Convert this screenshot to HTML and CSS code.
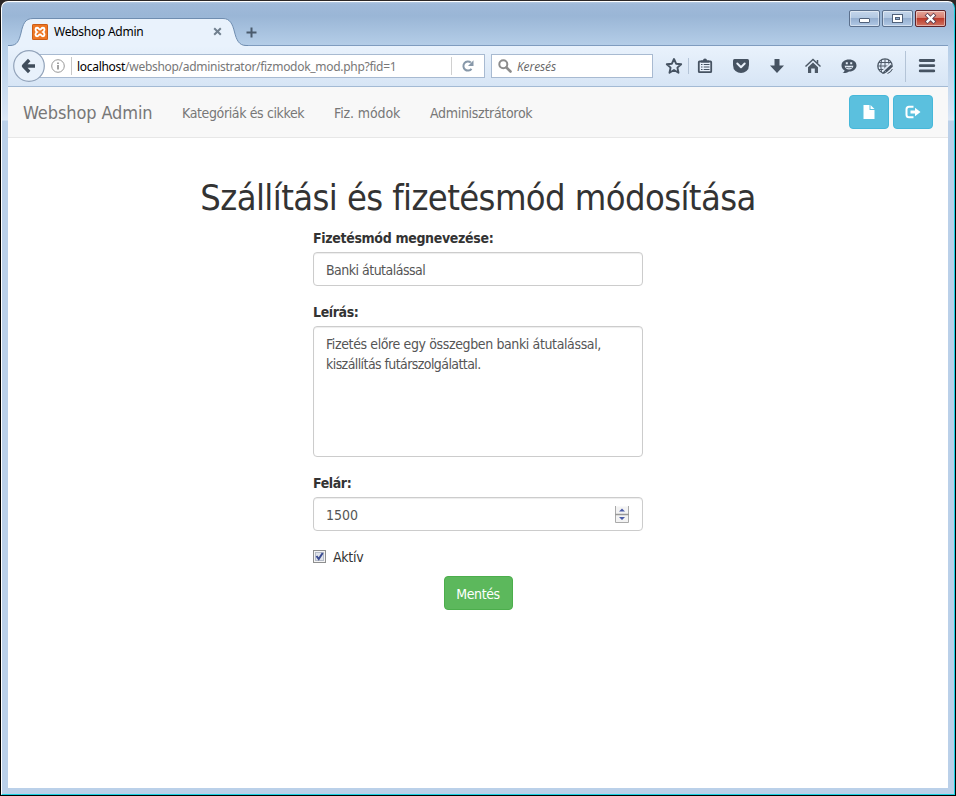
FILE: index.html
```html
<!DOCTYPE html>
<html lang="hu">
<head>
<meta charset="utf-8">
<title>Webshop Admin</title>
<link rel="stylesheet" href="styles.css">
</head>
<body>
<div class="window">
  <div class="titlebar">
    <div class="tab">
      <svg class="tab-shape" width="240" height="29" viewBox="0 0 240 29">
        <path d="M0 27.5H2C9 27.5 11 23 13 15C15 6 17 .5 25 .5H215C222 .5 224.500 6 226.500 14C228.500 22 231 27.500 238 27.500H240V29H0Z" fill="#e9f2fc"/>
        <path d="M0 27.500H2C9 27.500 11 23 13 15C15 6 17 .5 25 .5H215C222 .5 224.500 6 226.500 14C228.500 22 231 27.500 238 27.500H240" fill="none" stroke="#6f8db0"/>
      </svg>
      <svg class="favicon" width="16" height="16" viewBox="0 0 16 16">
        <rect width="16" height="16" rx="1.500" fill="#ee7623"/><rect x=".5" y=".5" width="15" height="15" rx="1" fill="none" stroke="#c95d18"/>
        <path d="M5 3.800C3.300 3.800 2.800 6.600 5 8C2.800 9.400 3.300 12.200 5 12.200C7 12.200 6.500 10.400 8 10.400S9 12.200 11 12.200C12.700 12.200 13.200 9.400 11 8C13.200 6.600 12.700 3.800 11 3.800C9 3.800 9.500 5.600 8 5.600S7 3.800 5 3.800Z" fill="none" stroke="#fff" stroke-width="1.900"/>
      </svg>
      <span class="tab-title">Webshop Admin</span>
      <svg class="tab-close" width="9" height="9" viewBox="0 0 9 9"><path d="M1.200 1.200L7.800 7.800M7.800 1.200L1.200 7.800" stroke="#71808f" stroke-width="2"/></svg>
    </div>
    <svg class="new-tab" width="11" height="11" viewBox="0 0 11 11"><path d="M5.500 .5V10.500M.5 5.500H10.500" stroke="#4a5b6d" stroke-width="2"/></svg>
    <div class="controls">
      <div class="control"><svg width="29" height="15" viewBox="0 0 29 15"><rect x="9.500" y="7.500" width="10" height="4" rx=".5" fill="#fff" stroke="#50617a"/></svg></div>
      <div class="control"><svg width="29" height="15" viewBox="0 0 29 15"><rect x="9.500" y="3.500" width="10" height="8" fill="#fff" stroke="#50617a"/><rect x="12.500" y="6.500" width="4" height="2" fill="#8fabcf" stroke="#50617a"/></svg></div>
      <div class="control control-close"><svg width="29" height="15" viewBox="0 0 29 15"><path d="M11.500 4.500L17.500 10.500M17.500 4.500L11.500 10.500" stroke="#604050" stroke-width="4" stroke-linecap="square"/><path d="M11.500 4.500L17.500 10.500M17.500 4.500L11.500 10.500" stroke="#fff" stroke-width="2.300" stroke-linecap="square"/></svg></div>
    </div>
  </div>

  <div class="toolbar">
    <svg class="back" width="32" height="32" viewBox="0 0 32 32"><circle cx="16" cy="16" r="15.300" fill="#e8f1fb" stroke="#92a3ba" stroke-width="1.200"/><path d="M16.200 10L10.500 16L16.200 22M11 16H22" fill="none" stroke="#3f4c5b" stroke-width="3.400" stroke-linejoin="round"/></svg>
    <div class="urlbar">
      <svg class="info" width="14" height="14" viewBox="0 0 14 14"><circle cx="7" cy="7" r="6.300" fill="none" stroke="#989898"/><path d="M7 6V10.500M7 3.500V5" stroke="#8a8a8a" stroke-width="1.600"/></svg>
      <span class="url"><span class="host">localhost</span><span class="path">/webshop/administrator/fizmodok_mod.php?fid=1</span></span>
      <span class="reload"><svg width="12" height="12" viewBox="0 0 12 12"><path d="M9.500 8.800A4.500 4.500 0 1 1 8.800 2.600" fill="none" stroke="#8798a9" stroke-width="2"/><path d="M11.500 .3V6H6Z" fill="#8798a9"/></svg></span>
    </div>
    <div class="search">
      <svg width="14" height="14" viewBox="0 0 14 14"><circle cx="5.300" cy="5.300" r="4" fill="none" stroke="#8c8c8c" stroke-width="2"/><path d="M8.500 8.500L12.500 12.500" stroke="#8c8c8c" stroke-width="2.600" stroke-linecap="round"/></svg>
      <span>Keresés</span>
    </div>
    <div class="tools">
      <svg width="18" height="18" viewBox="0 0 18 18"><path d="M9 2L11.100 6.700L16.200 7.200L12.400 10.600L13.500 15.700L9 13L4.500 15.700L5.600 10.600L1.800 7.200L6.900 6.700Z" fill="none" stroke="#465362" stroke-width="1.900" stroke-linejoin="round"/></svg>
      <i class="rule rule-short"></i>
      <svg width="18" height="18" viewBox="0 0 18 18"><path d="M3.500 4.500H14.500Q15.200 4.500 15.200 5.200V14.500Q15.200 15.200 14.500 15.200H3.500Q2.800 15.200 2.800 14.500V5.200Q2.800 4.500 3.500 4.500Z" fill="#e9f1fb" stroke="#465362" stroke-width="1.800"/><path d="M5 5.500V3.500H7Q7 1.500 9 1.500T11 3.500H13V5.500Z" fill="#465362"/><path d="M5 7.500H6.500M7.700 7.500H13.500M5 10H6.500M7.700 10H13.500M5 12.500H6.500M7.700 12.500H13.500" stroke="#465362" stroke-width="1.200"/></svg>
      <svg width="18" height="18" viewBox="0 0 18 18"><path d="M2.500 2H15.500Q17 2 17 3.500V8Q17 12 14.500 14T9 16Q6 16 3.500 14T1 8V3.500Q1 2 2.500 2Z" fill="#465362"/><path d="M5.300 6.500L9 10.200L12.700 6.500" fill="none" stroke="#e9f1fb" stroke-width="2" stroke-linecap="round" stroke-linejoin="round"/></svg>
      <svg width="18" height="18" viewBox="0 0 18 18"><path d="M6.500 2H11.500V8.500H16L9 16L2 8.500H6.500Z" fill="#465362"/></svg>
      <svg width="18" height="18" viewBox="0 0 18 18"><path d="M1.500 9.500L9 2.500L16.500 9.500M13.500 3V6" fill="none" stroke="#4d5966" stroke-width="1.500"/><path d="M4 10.300L9 5.600L14 10.300V16H10.800V11.500H7.200V16H4Z" fill="#4d5966"/></svg>
      <svg width="18" height="18" viewBox="0 0 18 18"><path d="M9 2.500C13.500 2.500 16.500 5 16.500 8.500S13 14.800 9 14.500C7 16 4.500 16.300 2.500 16C4 15.300 4.500 14.500 4.500 13.300C2.500 12.300 1.500 10.500 1.500 8.500C1.500 5 4.500 2.500 9 2.500Z" fill="#465362"/><path d="M4.500 8.800H13.500Q12.500 12.500 9 12.500T4.500 8.800Z" fill="#e4edf8"/><path d="M6 10.300Q9 11.500 12 10.300" fill="none" stroke="#465362" stroke-width=".8"/><path d="M5.800 6.300H7.800M10.200 6.300H12.200" stroke="#e4edf8" stroke-width="2"/></svg>
      <svg width="18" height="18" viewBox="0 0 18 18"><g fill="none" stroke="#4f5b69"><circle cx="9" cy="9" r="7.200" stroke-width="1.300"/><path d="M9 2V16M2 9H16M3 5.500H15M3 12.500H15M5.500 3Q4 9 5.500 15M12.500 3Q14 9 12.500 15"/></g><path d="M8 16L16 8.500" stroke="#e3edf8" stroke-width="6"/><path d="M9.500 14.500L16 8.500" stroke="#465362" stroke-width="2.800"/><path d="M6 17L10.300 15.700L8.300 13.500Z" fill="#465362"/><path d="M11.500 16.500Q15 15.500 16.400 12" fill="none" stroke="#4f5b69"/></svg>
      <i class="rule"></i>
      <svg width="18" height="18" viewBox="0 0 18 18"><path d="M2.200 3.500H15.800M2.200 8.700H15.800M2.200 13.900H15.800" stroke="#465362" stroke-width="2.800" stroke-linecap="round"/></svg>
    </div>
  </div>

  <div class="page">
    <nav class="navbar">
      <a class="brand">Webshop Admin</a>
      <a class="link link-categories">Kategóriák és cikkek</a>
      <a class="link link-payments">Fiz. módok</a>
      <a class="link link-admins">Adminisztrátorok</a>
      <div class="actions">
        <a class="action"><svg width="14" height="14" viewBox="0 0 14 14"><path d="M1.500 0H7.500V5H12.500V14H1.500Z" fill="#fff"/><path d="M8.500 0L12.500 4H8.500Z" fill="#fff"/></svg></a>
        <a class="action"><svg width="16" height="14" viewBox="0 0 16 14"><path d="M8.500 1.800H4Q1.500 1.800 1.500 4.300V9.700Q1.500 12.200 4 12.200H8.500" fill="none" stroke="#fff" stroke-width="2"/><path d="M5.500 5.500H10V2.700L15.500 7L10 11.300V8.500H5.500Z" fill="#fff"/></svg></a>
      </div>
    </nav>
    <main>
      <h1>Szállítási és fizetésmód módosítása</h1>
      <form class="form">
        <label class="label">Fizetésmód megnevezése:</label>
        <div class="field name">Banki átutalással</div>
        <label class="label tight">Leírás:</label>
        <div class="field area"><div class="line1">Fizetés előre egy összegben banki átutalással,</div><div class="line2">kiszállítás futárszolgálattal.</div></div>
        <label class="label tight">Felár:</label>
        <div class="field number"><span>1500</span>
          <svg class="spinner" width="14" height="17" viewBox="0 0 14 17"><rect x=".5" y=".5" width="13" height="16" fill="#f3f3f3"/><path d="M.5 0V16.500H13.500V0" fill="none" stroke="#aaa"/><path d="M0 8.500H14" stroke="#999" stroke-width="1.500"/><path d="M4 5.500H10L7 2.500ZM4 11H10L7 14Z" fill="#4a5ba8"/></svg>
        </div>
        <label class="check">
          <svg width="13" height="13" viewBox="0 0 13 13"><rect x=".5" y=".5" width="12" height="12" fill="#f4f4f4" stroke="#8e8f8f"/><rect x="2.500" y="2.500" width="8" height="8" fill="#dfe3ea" stroke="#b5bbc7"/><path d="M3.500 6L5.700 9L9.700 3" fill="none" stroke="#3b4c92" stroke-width="2"/></svg>
          <span>Aktív</span>
        </label>
        <button type="button" class="save">Mentés</button>
      </form>
    </main>
  </div>
</div>
</body>
</html>
```
FILE: styles.css
```css
* { box-sizing: border-box; }
body { margin: 0; background: linear-gradient(#2b2626 0, #2b2626 3px, #000 30px); }
svg { display: block; flex: none; }

.window {
  width: 954px; height: 794px;
  margin: 1px 0 1px 1px;
  padding: 0 6px 6px;
  display: flex; flex-direction: column;
  border: 1px solid #19cfe0;
  border-left-color: #fff; border-top-color: #fff;
  border-radius: 7px 7px 0 0;
  background: linear-gradient(#b4c9e2 0, #9fb9d9 2px, #9ab6d6 14px, #b5cee8 44px, #d5e3f4 110px, #dce8f6 118px, #bad0e9 119px);
}

.titlebar {
  height: 44px; flex: none;
  display: flex; align-items: flex-end;
  border-bottom: 1px solid #7f9cbf;
  font: 12px "Noto Sans", sans-serif;
}
.tab { position: relative; width: 238px; height: 28px; margin-bottom: -1px; display: flex; align-items: center; padding: 0 0 1px 24px; }
.tab-shape { position: absolute; left: 0; top: 0; }
.favicon, .tab-title, .tab-close { position: relative; }
.tab-title { width: 159px; margin-left: 6px; letter-spacing: -.26px; color: #000; }
.new-tab { margin: 0 0 7px; }
.controls { align-self: flex-start; margin: 8px 2px 0 auto; display: flex; gap: 2px; }
.control {
  width: 31px; height: 17px;
  border: 1px solid #5b708d; border-radius: 2px;
  background: linear-gradient(#c5d6eb 0, #b2c8e2 45%, #95afd0 50%, #b1c9e5 100%);
  box-shadow: inset 0 0 0 1px rgba(255,255,255,.45);
}
.control-close { border-color: #5d2229; background: linear-gradient(#e6a79b 0, #d77e70 45%, #bd3b2b 50%, #cf7463 100%); }

.toolbar {
  height: 41px; flex: none;
  display: flex; align-items: center;
  padding: 0 0 0 5px;
  background: linear-gradient(#e9f2fc, #d7e5f5);
  border-bottom: 1px solid #a3bad4;
  font: 12px "Noto Sans", sans-serif;
}
.titlebar { height: 44px; }
.back { position: relative; z-index: 1; }
.urlbar {
  width: 446px; height: 24px; margin-left: -6px;
  display: flex; align-items: center;
  background: #fff; border: 1px solid #a8bad1;
}
.info { margin-left: 11px; }
.url { width: 380px; height: 18px; margin-left: 6px; padding-left: 5px; line-height: 20px; border-left: 1px solid #c8c8c8; white-space: nowrap; letter-spacing: -.29px; }
.host { color: #000; }
.path { color: #777; }
.reload { height: 18px; flex: 1; padding-left: 10px; display: flex; align-items: center; border-left: 1px solid #d0d0d0; }
.search {
  width: 162px; height: 24px; margin-left: 6px; padding-left: 6px;
  display: flex; align-items: center; gap: 5px;
  background: #fff; border: 1px solid #a8bad1;
  font-family: "Open Sans", sans-serif; font-style: italic; color: #666; letter-spacing: -.1px;
}
.tools { flex: 1; height: 40px; padding: 0 0 0 12px; display: flex; align-items: center; gap: 18px; }
.tools > :first-child { margin-right: -13px; }
.rule { width: 1px; height: 31px; background: #b4c4d7; margin: 0 -6px 0 -7px; }
.rule-short { height: 16px; margin: 0 -11px 0 0; }

.page { flex: 1; background: #fff; font: 14px/20px "DejaVu Sans Condensed", "DejaVu Sans", sans-serif; color: #333; }
.navbar { height: 51px; padding-left: 15px; display: flex; align-items: center; background: #f8f8f8; border-bottom: 1px solid #e7e7e7; color: #777; }
.brand { width: 129px; margin-right: 15px; padding-top: 2px; font-size: 18px; white-space: nowrap; letter-spacing: -.1px; }
.link { padding: 2px 15px 0; white-space: nowrap; }
.link-categories { width: 152px; letter-spacing: -.37px; }
.link-payments { width: 96px; letter-spacing: -.1px; }
.link-admins { letter-spacing: -.3px; }
.actions { margin: 0 15px 0 auto; display: flex; gap: 4px; }
.action { width: 40px; height: 34px; display: flex; align-items: center; justify-content: center; background: #5bc0de; border: 1px solid #46b8da; border-radius: 4px; }

h1 { margin: 40px 0 10px; font-size: 36px; line-height: 40px; font-weight: 400; letter-spacing: -.59px; text-align: center; white-space: nowrap; font-variant-ligatures: none; }
.form { width: 330px; margin: 0 auto; display: flex; flex-direction: column; }
.label { margin-bottom: 4px; font-weight: 700; letter-spacing: -.33px; }
.tight { letter-spacing: -.38px; }
.field { height: 34px; margin-bottom: 16px; padding: 7px 12px 5px; border: 1px solid #ccc; border-radius: 4px; box-shadow: inset 0 1px 1px rgba(0,0,0,.075); color: #555; white-space: nowrap; }
.name { letter-spacing: -.52px; }
.area { height: 131px; }
.line1 { letter-spacing: -.38px; }
.line2 { letter-spacing: -.58px; }
.number { display: flex; align-items: center; justify-content: space-between; }
.spinner { margin: -2px 1px 0 0; }
.check { display: flex; align-items: center; gap: 7px; letter-spacing: -.3px; margin-bottom: 9px; }
.check svg { margin-top: -1px; }
.save { align-self: center; width: 69px; height: 34px; padding: 2px 0 0; border: 1px solid #4cae4c; border-radius: 4px; background: #5cb85c; color: #fff; font: inherit; letter-spacing: -.4px; }
```
